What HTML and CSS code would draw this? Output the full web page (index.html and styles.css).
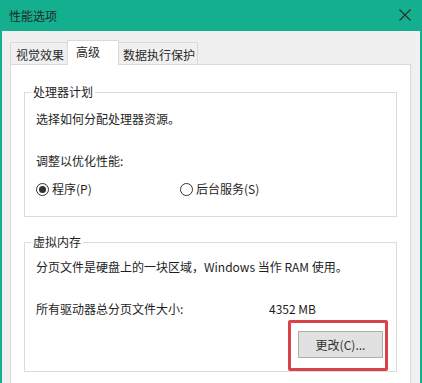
FILE: index.html
```html
<!DOCTYPE html>
<html lang="zh-CN">
<head>
    <meta charset="UTF-8">
    <meta name="viewport" content="width=device-width, initial-scale=1.0">
    <title>性能选项</title>
    <link rel="stylesheet" href="styles.css">
</head>
<body>

<div class="window">
    <div class="titlebar">
        <span class="title">性能选项</span>
        <svg class="close" width="12" height="12" viewBox="0 0 12 12">
            <path d="M0.5 0.5 L11.5 11.5 M11.5 0.5 L0.5 11.5" stroke="#2b2b2b" stroke-width="1.1" fill="none"/>
        </svg>
    </div>

    <div class="content">
        <div class="tabs">
            <div class="tab first">视觉效果</div>
            <div class="tab active">高级</div>
            <div class="tab last">数据执行保护</div>
        </div>

        <div class="panel">
            <fieldset class="group">
                <legend>处理器计划</legend>
                <div class="group-body cpu">
                    <p class="line">选择如何分配处理器资源。</p>
                    <p class="line tune">调整以优化性能:</p>
                    <div class="radios">
                        <label class="radio-item"><span class="radio checked"></span>程序(P)</label>
                        <label class="radio-item"><span class="radio"></span>后台服务(S)</label>
                    </div>
                </div>
            </fieldset>

            <fieldset class="group memory">
                <legend>虚拟内存</legend>
                <div class="group-body mem">
                    <p class="line">分页文件是硬盘上的一块区域，Windows 当作 RAM 使用。</p>
                    <div class="size-row">
                        <span>所有驱动器总分页文件大小:</span>
                        <span>4352 MB</span>
                    </div>
                    <div class="btn-row">
                        <button class="btn">更改(C)...</button>
                        <span class="highlight"></span>
                    </div>
                </div>
            </fieldset>
        </div>
    </div>
</div>

</body>
</html>
```

FILE: styles.css
```css
body {
    margin: 0;
    font-family: "Noto Sans CJK SC", "Microsoft YaHei", sans-serif;
    font-size: 12px;
    line-height: 16px;
    color: #1e1e1e;
    background: #f0f0f0;
}
.window {
    width: 422px;
    height: 383px;
    box-sizing: border-box;
    border-left: 2px solid #14af8e;
    border-right: 2px solid #14af8e;
    background: #f0f0f0;
    overflow: hidden;
}
.titlebar {
    height: 31px;
    background: #14af8e;
    display: flex;
    align-items: center;
    justify-content: space-between;
    padding: 0 9px 0 7px;
}
.title {
    color: #1f2a27;
}
.close {
    display: block;
    margin-top: -2px;
}
.content {
    padding: 9px 9px 0 8px;
}
.tabs {
    display: flex;
    align-items: flex-end;
    height: 24px;
}
.tab {
    height: 22px;
    box-sizing: border-box;
    border: 1px solid #d9d9d9;
    border-bottom: none;
    background: #f0f0f0;
    padding: 4px 4px 0;
    white-space: nowrap;
    color: #2a2a2a;
}
.tab.first {
    padding: 4px 3px 0 5px;
}
.tab.last {
    padding: 4px 2px 0 4px;
}
.tab + .tab {
    margin-left: -1px;
}
.tab.active {
    height: 25px;
    margin-bottom: -1px;
    background: #fff;
    padding: 3px 18px 0 8px;
    position: relative;
    z-index: 1;
}
.panel {
    background: #fff;
    border: 1px solid #d9d9d9;
    height: 330px;
    padding: 19px 13px 0;
}
.group {
    margin: 0;
    padding: 0;
    border: 1px solid #dcdcdc;
    min-width: 0;
}
.group legend {
    margin-left: 6px;
    padding: 0 2px;
    line-height: 16px;
}
.group.memory {
    margin-top: 17px;
}
.group-body {
    padding: 0 13px 0 11px;
}
.line {
    margin: 0;
}
.cpu {
    padding-top: 11px;
    padding-bottom: 19px;
}
.cpu .tune {
    margin-top: 26px;
}
.radios {
    display: grid;
    grid-template-columns: 144px auto;
    margin-top: 12px;
}
.radio-item {
    display: flex;
    align-items: center;
    gap: 3px;
}
.radio {
    width: 13px;
    height: 13px;
    box-sizing: border-box;
    border: 1px solid #333;
    border-radius: 50%;
    display: flex;
    align-items: center;
    justify-content: center;
}
.radio.checked::after {
    content: "";
    width: 7px;
    height: 7px;
    border-radius: 50%;
    background: #333;
}
.mem {
    padding-top: 9px;
    padding-bottom: 13px;
}
.size-row {
    display: grid;
    grid-template-columns: 233px auto;
    margin-top: 26px;
}
.btn-row {
    position: relative;
    display: flex;
    justify-content: flex-end;
    margin-top: 14px;
}
.btn {
    width: 85px;
    height: 27px;
    border: 1px solid #adadad;
    background: #e1e1e1;
    font-family: inherit;
    font-size: 12px;
    color: #333;
    padding: 0;
}
.highlight {
    position: absolute;
    right: -5px;
    top: -11px;
    width: 100px;
    height: 51px;
    box-sizing: border-box;
    border: 3px solid #d8424a;
    border-radius: 2px;
}
```
